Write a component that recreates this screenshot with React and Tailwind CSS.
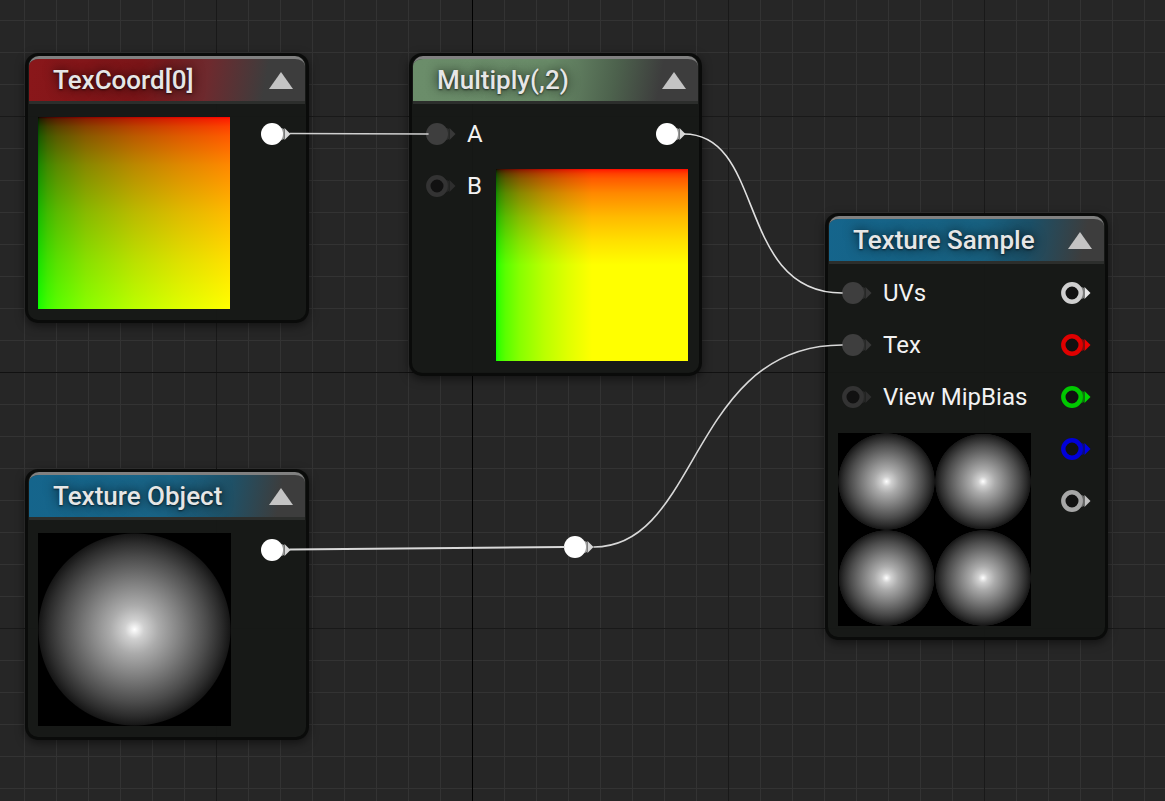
const texCoordBg =
  "bg-[linear-gradient(to_right,#000_0%,#1f0000_1%,#410000_5%,#5a0000_10%,#880000_25%,#ba0000_50%,#e00000_75%,#ff0000_100%),linear-gradient(to_bottom,#000_0%,#001f00_1%,#004100_5%,#005a00_10%,#008800_25%,#00ba00_50%,#00e000_75%,#00ff00_100%)] bg-blend-screen";
const multiplyBg =
  "bg-[linear-gradient(to_right,#000_0%,#1f0000_0.5%,#410000_2.5%,#5a0000_5%,#880000_12.5%,#ba0000_25%,#e00000_37.5%,#ff0000_50%),linear-gradient(to_bottom,#000_0%,#001f00_0.5%,#004100_2.5%,#005a00_5%,#008800_12.5%,#00ba00_25%,#00e000_37.5%,#00ff00_50%)] bg-blend-screen";
const sphereBg =
  "bg-[radial-gradient(circle_closest-side,#ffffff_0%,#ececec_4%,#d0d0d0_10%,#ababab_25%,#7c7c7c_50%,#4c4c4c_75%,#2c2c2c_90%,#161616_99%,#000000_100%)]";

function Pin({ color = "#ffffff", hollow = false, arrow, className = "" }) {
  return (
    <svg width="30" height="22" viewBox="0 0 30 22" className={"shrink-0 blur-[0.4px] " + className}>
      <path d="M17 3.5 L23 6 L23 16 L17 18.5 Z" fill={color} opacity="0.55" />
      {hollow ? (
        <circle cx="11" cy="11" r="8.7" fill="#111111" stroke={color} strokeWidth="4.4" />
      ) : (
        <circle cx="11" cy="11" r="11" fill={color} />
      )}
      <path d="M23.5 5 L29.5 11 L23.5 17 Z" fill={arrow || color} />
    </svg>
  );
}

function NodeShell({ title, accent, className, children }) {
  return (
    <div
      className={
        "absolute flex flex-col rounded-[13px] border-[3px] border-[#0a0b0a] bg-[#161816]/95 shadow-[0_3px_10px_rgba(0,0,0,0.5)] " +
        className
      }
    >
      <div className="relative mx-px flex h-[48px] shrink-0 items-center justify-between overflow-hidden rounded-t-[10px] border-t-[3px] border-[#808080] border-b-[3px] border-b-[#2c2e2c] bg-[#3d3d3d] pr-[12px] pl-[24px]">
        <div className={"absolute inset-0 " + accent} />
        <span className="relative font-['Roboto',sans-serif] text-[26px] leading-none font-medium text-[#e6e6e6] [text-shadow:0_0_12px_rgba(0,0,0,0.85),0_1px_2px_rgba(0,0,0,0.6)]">
          {title}
        </span>
        <svg width="24" height="17" viewBox="0 0 24 17" className="relative">
          <path d="M12 0 L24 17 L0 17 Z" fill="#c4c4c4" />
        </svg>
      </div>
      {children}
    </div>
  );
}

function Row({ label, hollow, color }) {
  return (
    <div className="flex h-[22px] items-center gap-[11px]">
      <Pin color={color} arrow={hollow ? "#2e2e2e" : "#383838"} hollow={hollow} />
      <span className="font-['Roboto',sans-serif] text-[24px] leading-none text-[#f2f2f2]">{label}</span>
    </div>
  );
}

export default function App() {
  return (
    <div className="relative h-[801px] w-[1165px] overflow-hidden bg-[#262626]">
      {/* graph paper */}
      <div className="absolute inset-0 bg-[linear-gradient(to_right,#333333_1px,transparent_1px),linear-gradient(to_bottom,#333333_1px,transparent_1px)] bg-[size:32px_32px] bg-[position:24px_20px]" />
      <div className="absolute inset-0 bg-[linear-gradient(to_right,#191919_1px,transparent_1px),linear-gradient(to_bottom,#191919_1px,transparent_1px)] bg-[size:256px_256px] bg-[position:216px_116px]" />
      <div className="absolute top-0 left-[472px] h-full w-px bg-black" />
      <div className="absolute top-[372px] left-0 h-px w-full bg-[#111111]" />

      <NodeShell
        title="TexCoord[0]"
        accent="bg-[linear-gradient(100deg,#8a171a_0%,#7a1518_40%,#6e2a2e_64%,transparent_85%)]"
        className="top-[53px] left-[25px] h-[270px] w-[284px]"
      >
        <div className="flex items-start pt-[13px] pl-[10px]">
          <div className={"h-[192px] w-[192px] " + texCoordBg} />
          <Pin className="mt-[6px] ml-[31px]" arrow="#d8d8d8" />
        </div>
      </NodeShell>

      <NodeShell
        title="Multiply(,2)"
        accent="bg-[linear-gradient(100deg,#6b8d6a_0%,#6a8c69_48%,#4d624d_70%,transparent_86%)]"
        className="top-[53px] left-[409px] h-[323px] w-[293px]"
      >
        <div className="flex flex-col pt-[19px] pr-[13px] pl-[14px]">
          <div className="flex items-center justify-between">
            <Row label="A" color="#3e3e3e" />
            <Pin arrow="#d8d8d8" />
          </div>
          <div className="mt-[30px] flex items-start">
            <Row label="B" hollow color="#333333" />
            <div className={"-mt-[6px] ml-[14px] h-[192px] w-[192px] shrink-0 " + multiplyBg} />
          </div>
        </div>
      </NodeShell>

      <NodeShell
        title="Texture Sample"
        accent="bg-[linear-gradient(100deg,#15658c_0%,#18607f_55%,#1c4f66_72%,transparent_92%)]"
        className="top-[213px] left-[825px] h-[427px] w-[283px]"
      >
        <div className="flex justify-between pt-[18px] pr-[14px] pl-[10px]">
          <div className="flex flex-col">
            <div className="flex flex-col gap-[30px] pl-[4px]">
              <Row label="UVs" color="#3e3e3e" />
              <Row label="Tex" color="#3e3e3e" />
              <Row label="View MipBias" hollow color="#333333" />
            </div>
            <div className="mt-[25px] grid h-[193px] w-[193px] grid-cols-2 grid-rows-2 bg-black">
              <div className={sphereBg} />
              <div className={sphereBg} />
              <div className={sphereBg} />
              <div className={sphereBg} />
            </div>
          </div>
          <div className="flex flex-col gap-[30px]">
            <Pin hollow color="#cfcfcf" arrow="#e8e8e8" />
            <Pin hollow color="#e00000" arrow="#f00000" />
            <Pin hollow color="#00c800" arrow="#00d800" />
            <Pin hollow color="#0000d8" arrow="#0000e8" />
            <Pin hollow color="#a6a6a6" arrow="#c0c0c0" />
          </div>
        </div>
      </NodeShell>

      <NodeShell
        title="Texture Object"
        accent="bg-[linear-gradient(100deg,#15658c_0%,#1a6486_50%,#1f5167_72%,transparent_90%)]"
        className="top-[469px] left-[25px] h-[271px] w-[284px]"
      >
        <div className="flex items-start pt-[13px] pl-[10px]">
          <div className="h-[193px] w-[193px] bg-black">
            <div className={"h-full w-full " + sphereBg} />
          </div>
          <Pin className="mt-[6px] ml-[30px]" arrow="#d8d8d8" />
        </div>
      </NodeShell>

      {/* reroute knot */}
      <div className="absolute top-[536px] left-[564px]">
        <Pin arrow="#d8d8d8" />
      </div>

      <svg width="1165" height="801" className="pointer-events-none absolute inset-0" fill="none" strokeLinecap="round">
        <path d="M290 133.5 L428 134" stroke="#d0d0d0" strokeWidth="1.6" />
        <path d="M684 134 C766 134 736 293 842 293" stroke="#e0e0e0" strokeWidth="1.6" />
        <path d="M290 549.5 L564 547" stroke="#d8d8d8" strokeWidth="2" />
        <path d="M594 547 C700 547 690 345 842 345" stroke="#d8d8d8" strokeWidth="1.6" />
      </svg>
    </div>
  );
}
